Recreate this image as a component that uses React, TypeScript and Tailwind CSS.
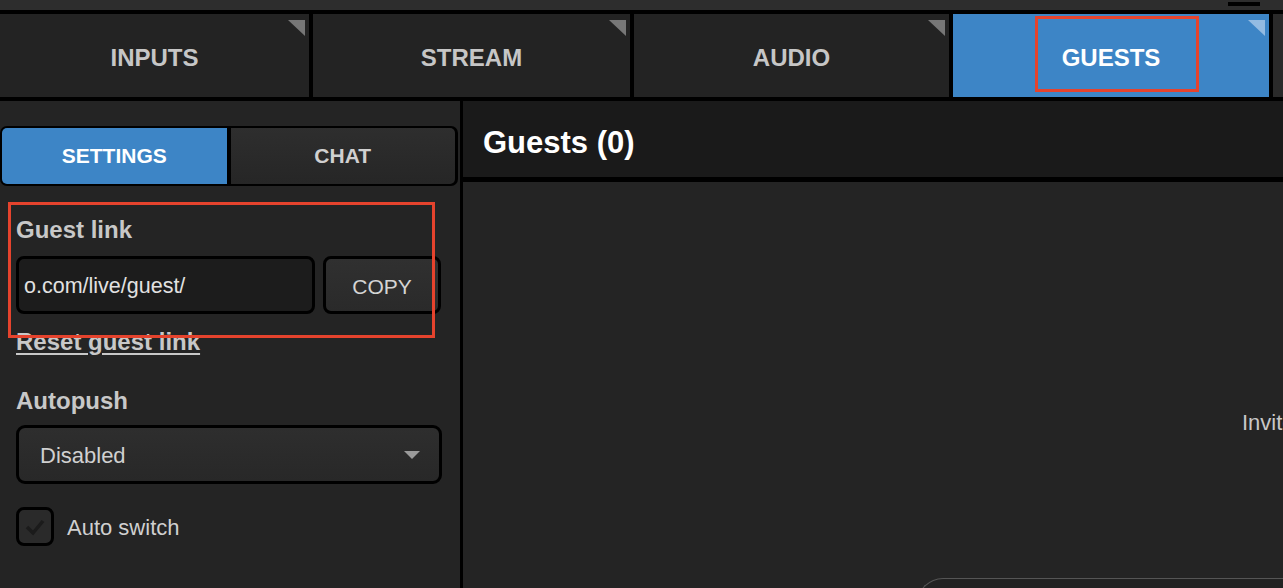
import React from 'react'

const font = { fontFamily: '"Liberation Sans", Arial, Helvetica, sans-serif' }

function Corner({ active }: { active?: boolean }) {
  return (
    <svg className="absolute right-[4px] top-[6px]" width="17" height="16" viewBox="0 0 17 16">
      <polygon points="0,0 17,0 17,16" fill={active ? '#93bbe2' : '#777777'} />
    </svg>
  )
}

function Tab({ label, w, active }: { label: string; w: string; active?: boolean }) {
  return (
    <div
      className={`relative flex shrink-0 items-center justify-center pt-[4px] text-[24px] font-bold ${w} ${
        active ? 'bg-[#3d85c6] text-white' : 'bg-[#232323] text-[#c6c6c6]'
      }`}
    >
      {label}
      <Corner active={active} />
    </div>
  )
}

export default function App() {
  return (
    <div className="relative flex h-[588px] w-full flex-col overflow-hidden bg-black" style={font}>
      {/* top strip */}
      <div className="flex h-[10px] shrink-0 justify-end bg-[#2d2d2d] pr-[23px] pt-[2px]">
        <div className="h-[4px] w-[32px] bg-black" />
      </div>

      {/* main tabs */}
      <div className="mt-[4px] flex h-[83px] shrink-0 gap-[4px]">
        <Tab label="INPUTS" w="w-[309px]" />
        <Tab label="STREAM" w="w-[317px]" />
        <Tab label="AUDIO" w="w-[315px]" />
        <Tab label="GUESTS" w="w-[316px]" active />
        <div className="flex-1 bg-[#2a2a2a]" />
      </div>

      <div className="mt-[4px] flex min-h-0 flex-1 gap-[3px]">
        {/* sidebar */}
        <div className="flex w-[460px] shrink-0 flex-col bg-[#242424] pt-[25px]">
          <div className="flex h-[60px] w-[458px] gap-[4px] rounded-[7px] bg-black p-[2px] pr-[3px]">
            <div className="flex flex-1 items-center justify-center rounded-l-[5px] bg-[#3d85c6] text-[21px] font-bold text-white">
              SETTINGS
            </div>
            <div className="flex flex-1 items-center justify-center rounded-r-[5px] bg-gradient-to-b from-[#2e2e2e] to-[#262626] text-[21px] font-bold text-[#d0d0d0]">
              CHAT
            </div>
          </div>

          <div className="px-[16px]">
            <div className="mt-[32px] text-[24px] font-bold leading-[24px] text-[#c8c8c8]">Guest link</div>

            <div className="mt-[14px] flex h-[58px] gap-[8px]">
              <div className="flex w-[299px] items-center overflow-hidden rounded-[8px] border-[3px] border-black bg-[#1c1c1c] pl-[5px] pt-[3px] text-[21.5px] text-[#e2e2e2]">
                <span className="whitespace-nowrap">o.com/live/guest/</span>
              </div>
              <div className="flex w-[118px] items-center justify-center rounded-[8px] border-[3px] border-black bg-gradient-to-b from-[#303030] to-[#2a2a2a] pt-[3px] text-[21px] text-[#d4d4d4]">
                COPY
              </div>
            </div>

            <div className="mt-[16px] text-[24px] font-bold leading-[24px] text-[#c8c8c8] underline decoration-[2px] underline-offset-[3px]">
              Reset guest link
            </div>

            <div className="mt-[35px] text-[24px] font-bold leading-[24px] text-[#c8c8c8]">Autopush</div>

            <div className="mt-[12px] flex h-[59px] w-[426px] items-center justify-between rounded-[9px] border-[3px] border-black bg-gradient-to-b from-[#2e2e2e] to-[#282828] pl-[21px] pr-[19px] pt-[2px] text-[22px] text-[#d0d0d0]">
              <span>Disabled</span>
              <svg width="16" height="9" viewBox="0 0 16 9">
                <polygon points="0,0 16,0 8,8" fill="#9a9a9a" />
              </svg>
            </div>

            <div className="mt-[23px] flex items-center gap-[13px]">
              <div className="flex h-[39px] w-[38px] items-center justify-center rounded-[8px] border-[3px] border-black bg-[#2a2a2a]">
                <svg width="22" height="18" viewBox="0 0 22 18">
                  <polyline points="3,9 9,15 19,3" fill="none" stroke="#1b1b1b" strokeWidth="3.5" />
                </svg>
              </div>
              <span className="pt-[2px] text-[22px] text-[#d0d0d0]">Auto switch</span>
            </div>
          </div>
        </div>

        {/* right panel */}
        <div className="flex min-w-0 flex-1 flex-col gap-[5px]">
          <div className="flex h-[76px] shrink-0 items-center bg-[#1a1a1a] pl-[20px] pt-[8px] text-[31px] font-bold text-white">
            Guests (0)
          </div>
          <div className="flex flex-1 flex-col overflow-hidden bg-[#242424]">
            <div className="mt-[230px] whitespace-nowrap pl-[779px] text-[22px] leading-[22px] text-[#c8c8c8]">
              Invite guests to join your stream
            </div>
            <div className="ml-[454px] mt-[144px] h-[40px] w-[600px] shrink-0 rounded-tl-[26px] border-l border-t border-[#555555] bg-[#222222]" />
          </div>
        </div>
      </div>

      {/* annotation boxes */}
      <div className="absolute left-[1035px] top-[16px] h-[76px] w-[164px] border-[3px] border-[#e5432d]" />
      <div className="absolute left-[8px] top-[202px] h-[136px] w-[427px] border-[3px] border-[#e5432d]" />
    </div>
  )
}
